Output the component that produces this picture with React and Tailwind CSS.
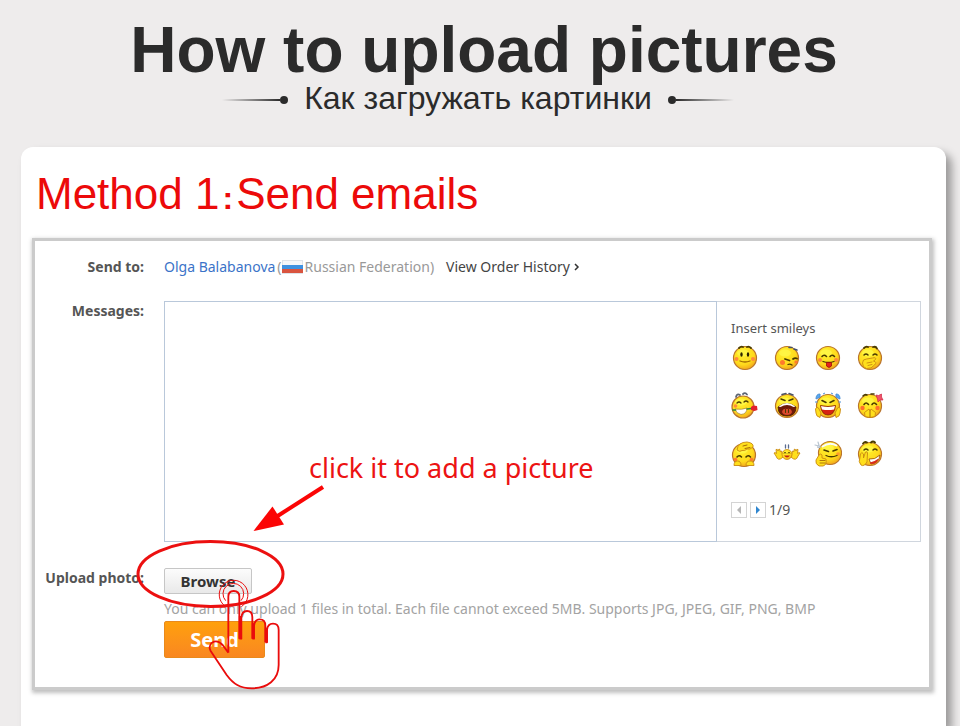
import React from "react";

function Head({ cx = 14, cy = 14, r = 11.5 }) {
  return (
    <>
      <circle cx={cx} cy={cy} r={r} fill="url(#skin)" stroke="#b9742c" strokeWidth="1.2" />
      <ellipse cx={cx - 2} cy={cy - 5} rx="6" ry="3.5" fill="#fff94d" opacity="0.7" />
    </>
  );
}

const ink = { fill: "none", stroke: "#4a3b00", strokeWidth: 1.3, strokeLinecap: "round" };
const hand = { fill: "#ffdf1c", stroke: "#c98a12", strokeWidth: 0.9 };

const smileys = [
  ["Smile", (
    <>
      <Head />
      <path d="M8 4q2-2 4-1M16 3q2-1 4 1" {...ink} strokeWidth="1.800" />
      <ellipse cx="10.500" cy="10.500" rx="1.200" ry="2.200" fill="#2d2500" />
      <ellipse cx="17" cy="10.500" rx="1.200" ry="2.200" fill="#2d2500" />
      <circle cx="5.500" cy="15" r="2" fill="#ff8a3c" />
      <circle cx="22" cy="15" r="2" fill="#ff8a3c" />
      <path d="M9 17q5 2 10 0" {...ink} stroke="#a06a00" />
    </>
  )],
  ["Shy", (
    <>
      <Head />
      <path d="M16 3.500l3 0M21 5l3 1" {...ink} stroke="#44506a" strokeWidth="1.600" />
      <path d="M12 15l4.500 1.500M20 15q2-1.500 4-.5" {...ink} strokeWidth="1.800" />
      <circle cx="9.500" cy="18.500" r="2.500" fill="#ff7a2c" />
      <circle cx="23" cy="18" r="1.600" fill="#ff7a2c" />
      <path d="M15 20.500q2-1 4 .5" {...ink} />
    </>
  )],
  ["Tongue out", (
    <>
      <Head />
      <path d="M8 12.500q2-2.500 4.500 0M16 12.500q2-2.500 4.500 0" {...ink} strokeWidth="1.600" />
      <circle cx="6" cy="16" r="2" fill="#ff8a3c" />
      <circle cx="22" cy="16" r="2" fill="#ff8a3c" />
      <path d="M9 17.500q5.500 2 11 0" {...ink} />
      <path d="M12.500 18.500h5v3.500q-2.500 3-5 0z" fill="#e5231b" stroke="#9c1109" strokeWidth="0.800" />
    </>
  )],
  ["Giggle", (
    <>
      <Head />
      <path d="M8 4q2-2 4-1M17 3q3-1 4 1.500" {...ink} strokeWidth="1.800" />
      <path d="M8 11q2-2 4 0M17 11q2-2 4 0" {...ink} strokeWidth="1.500" />
      <path d="M6.500 19q0-4 4-4l6-1q4-1 3 1.500l-2 1.500q4 1 1 4-3 4-8 3.500-4-1-4-5.500z" {...hand} />
      <path d="M11 19l5-1M12 21.500l4-1" {...ink} stroke="#c98a12" strokeWidth="0.900" />
    </>
  )],
  ["Rose", (
    <>
      <Head cx={12} cy={15} r={11} />
      <path d="M5 5q1-4 4-2M12 2q2-2 4 .5" {...ink} stroke="#5d6573" strokeWidth="1.800" />
      <path d="M6 11q2-2 4 0M13 10q2-2 4 0" {...ink} />
      <circle cx="4.500" cy="14" r="1.800" fill="#ff8a3c" />
      <path d="M4 17q7 1 12-1 0 6-6 6.500-5-1-6-5.500z" fill="#fff" stroke="#b08a30" strokeWidth="0.800" />
      <path d="M2 18l2.500 0M16 17l4-.5" {...ink} stroke="#27843b" strokeWidth="1.600" />
      <path d="M20 15l2-1.500 4 .5.500 4-3 1-3.500-1z" fill="#e21f2e" />
    </>
  )],
  ["Shout", (
    <>
      <Head />
      <path d="M9 2.500l4-1M16 1.500l4 1.500" {...ink} stroke="#4a5262" strokeWidth="1.500" />
      <path d="M8 7l4 1.500M20 7l-4 1.500" {...ink} strokeWidth="1.500" />
      <path d="M5 15q9-7 18 0 0 9-9 9t-9-9z" fill="#6e1a0a" stroke="#4a1c00" strokeWidth="0.800" />
      <path d="M5.500 14.500q8.500-7 17 0l-2 .5q-6.500-4-13 0z" fill="#fff" />
      <path d="M9 20q1-4 5-3 4-1 5 3-1 3-5 3t-5-3z" fill="#d9482b" />
      <path d="M12.500 17.500v3M15.500 17.500v3" {...ink} strokeWidth="1" />
    </>
  )],
  ["Laugh out loud", (
    <>
      <Head />
      <path d="M2 7q0-5 4-5v3zM26 7q0-5-4-5v3zM1 10h2.500M24.500 10h2.500M9 2l2-1M17 1l2 1" fill="#58a9ee" stroke="#4b8fd8" strokeWidth="1" />
      <path d="M8 8.500l4 2M20 8.500l-4 2" {...ink} strokeWidth="1.600" />
      <path d="M6.500 13.500q7.500 2 15 0-1 9.500-7.500 9.500t-7.500-9.500z" fill="#d62312" stroke="#7d2b00" strokeWidth="0.800" />
      <path d="M7 14q7 2 14 0l-1 3.500q-6 1-12 0z" fill="#fff" />
      <path d="M1.500 17q1-3 3-1l2.500 5-1 4.500q-4-1-4-4.500zM26.500 17q-1-3-3-1l-2.500 5 1 4.500q4-1 4-4.500z" {...hand} />
    </>
  )],
  ["In love", (
    <>
      <Head />
      <path d="M7 4q2-2 4-1M15 2l3 0" {...ink} strokeWidth="1.600" />
      <path d="M20 3l2.500.5 3-1.500v3l1.500 3-3 0-2 2-.5-3z" fill="#f05468" stroke="#cf2745" strokeWidth="0.700" />
      <path d="M8 12.500q2-3 4.500 0M16 12.500q2-3 4.500 0" {...ink} strokeWidth="1.600" />
      <circle cx="6.500" cy="16" r="2.200" fill="#ff6f2c" />
      <circle cx="21.500" cy="16" r="2.200" fill="#ff6f2c" />
      <path d="M8.500 20.500l4.500-3.500 1 2 1-2 4.500 3.500-.5 4-5 1-5-1z" {...hand} />
      <path d="M14 19v6" {...ink} stroke="#a76b09" strokeWidth="1" />
    </>
  )],
  ["Bow", (
    <>
      <Head cx={13} cy={15} r={11.5} />
      <path d="M6 10q1-8 10-8 7 1 6 5-3 3-6 2-2 2-5 1.500-2 2-5-.5z" {...hand} />
      <path d="M12 6l4-1M14 8.500l5-1" {...ink} stroke="#a76b09" strokeWidth="1" />
      <path d="M6 17q2-2.500 4.500 0M15 17q2-2.500 4.500 0" {...ink} strokeWidth="1.600" />
      <circle cx="4.500" cy="19.500" r="1.800" fill="#ff7a2c" />
      <circle cx="20.500" cy="19.500" r="1.800" fill="#ff7a2c" />
      <path d="M3 25.500q0-4.500 3.500-4.500t3.500 4.500zM15 25.500q0-4.500 4-4.500t4 4.500z" {...hand} />
    </>
  )],
  ["Hug", (
    <>
      <path d="M10 17q-5 5-7-1l-2-3q1-1 2.500.5L3 9.500q1.500-1 2 1.500l1-2q1.500 0 1 2.500l1.500-.5zM18 17q5 5 7-1l2-3q-1-1-2.500.5l.5-4q-1.500-1-2 1.500l-1-2q-1.500 0-1 2.500l-1.500-.5z" {...hand} />
      <circle cx="14" cy="14.500" r="5" fill="url(#skin)" stroke="#c98a12" strokeWidth="0.800" />
      <path d="M12.500 5v3M15.500 5v3" {...ink} stroke="#5a6c92" />
      <path d="M11 13q1-1.500 2 0M15 13q1-1.500 2 0" {...ink} strokeWidth="1" />
      <path d="M11 15.500h6q-3 4-6 0z" fill="#c3220f" />
    </>
  )],
  ["Thumbs up", (
    <>
      <Head cx={16} cy={13} r={11.5} />
      <path d="M1 5l4 1M4 2l1.500 5M6.500 7q-2 1-3 0" {...ink} stroke="#b9c5d1" strokeWidth="1.200" />
      <path d="M8.500 6.500q7-5 14-1" {...ink} stroke="#f8fbff" strokeWidth="1.800" />
      <path d="M10 10l4.500 1.500M23 9.500l-4 1.500" {...ink} strokeWidth="1.600" />
      <circle cx="24" cy="14" r="1.800" fill="#ff9a2c" />
      <path d="M12 15.500q5 2.500 11 0" {...ink} />
      <path d="M5 15q2-2 3 0v3l4 1q1 6-3 7H5q-4-2-3-6z" {...hand} />
      <path d="M6 20.500h5M6 23h5" {...ink} stroke="#a76b09" strokeWidth="0.900" />
    </>
  )],
  ["Whisper", (
    <>
      <Head />
      <path d="M7 3.500q2-2.500 4-1M15 2.500q2-2 4 0" {...ink} strokeWidth="1.800" />
      <path d="M8 10q2-2 4 0M17 10q2-2 4 0" {...ink} strokeWidth="1.500" />
      <path d="M13 19q6 1 11-4-1 8-9 9z" fill="#fff" stroke="#8a3a00" strokeWidth="0.700" />
      <path d="M14 22.500q4-.5 8.500-4-1 5.500-8 5.500z" fill="#d92b18" />
      <path d="M4.500 14q1-3 3 0v4l2-6q2-1 2 1l-.5 9q-3 5-6 3-3-3-1-8z" {...hand} />
    </>
  )],
];

function Flourish({ flip }) {
  return (
    <span aria-hidden="true" className={`flex items-center pt-1 ${flip ? "flex-row-reverse" : ""}`}>
      <span className={`h-0.5 w-[58px] from-transparent to-[#2b2b2b] ${flip ? "bg-linear-to-l" : "bg-linear-to-r"}`} />
      <span className="size-2 rounded-full bg-[#2b2b2b]" />
    </span>
  );
}

function PageButton({ label, disabled, d }) {
  return (
    <button type="button" aria-label={label} disabled={disabled} className="flex size-4 items-center justify-center border border-[#d4d4d4] bg-white">
      <svg viewBox="0 0 8 8" className="size-2" fill={disabled ? "#b5b5b5" : "#2f86cf"} aria-hidden="true"><path d={d} /></svg>
    </button>
  );
}

function SmileyPicker() {
  return (
    <section aria-label="Smileys" className="w-[204px] shrink-0 border border-l-0 border-[#d0d6de] pt-4 pl-[14px]">
      <h3 className="text-[13px] leading-5 text-[#555]">Insert smileys</h3>
      <div className="mt-1.5 grid w-[153px] grid-cols-[repeat(4,28px)] justify-between gap-y-5">
        {smileys.map(([name, art]) => (
          <button key={name} type="button" aria-label={name} className="size-7">
            <svg viewBox="0 0 28 28" className="size-7" aria-hidden="true">{art}</svg>
          </button>
        ))}
      </div>
      <div className="mt-8 flex items-center gap-[3px] text-sm leading-5 text-[#555]">
        <PageButton label="Previous page" disabled d="M6 0L2 4l4 4z" />
        <PageButton label="Next page" d="M2 0l4 4-4 4z" />
        <span>1/9</span>
      </div>
    </section>
  );
}

function Annotations() {
  return (
    <div className="pointer-events-none absolute top-0 left-0">
      <p className="absolute top-[211px] left-[274px] text-[27px] leading-8 whitespace-nowrap text-[#ec1313]">click it to add a picture</p>
      <svg viewBox="130 480 210 140" className="absolute top-[239px] left-[95px] h-[140px] w-[210px]" aria-hidden="true">
        <ellipse cx="210.500" cy="574" rx="72.500" ry="32.500" fill="none" stroke="#ec1010" strokeWidth="3" />
        <path d="M323 487L276 517" stroke="#fb0505" strokeWidth="4" />
        <path d="M253.500 531L272.500 506.500 284 524.500z" fill="#fb0505" />
      </svg>
      <svg viewBox="561 144 231 342" className="absolute top-[337px] left-[172px] h-[114px] w-[77px]" fill="none" stroke="#ea0c0c" strokeWidth="5.500" aria-hidden="true">
        <path d="M616 229A43 43 0 1 1 664 230" strokeWidth="3" />
        <path d="M617 212A31 31 0 1 1 663 212" strokeWidth="3" />
        <path d="M625 368V200Q625 183 641 183Q658 183 658 200V326M658 326h6V264Q665 243 681 243Q697 243 697 262V326M697 326h5V288Q704 268 719 268Q736 268 736 287V337M736 337h5V300Q743 281 759 281Q776 281 776 300V405C776 450 742 475 695 475C660 475 640 462 620 435L572 363Q564 348 576 338Q592 328 608 345L625 368" strokeLinejoin="round" />
        <path d="M661 258V326M700 280V326M739 295V337" strokeWidth="9" />
      </svg>
    </div>
  );
}

const label = "text-right text-sm leading-5 font-bold text-[#555]";

function EmailForm() {
  return (
    <form
      onSubmit={(e) => e.preventDefault()}
      className="relative border-[3px] border-[#cbcbcb] bg-white pt-4 pr-2 pb-[29px] font-['Noto_Sans',sans-serif] shadow-[1px_2px_4px_1px_rgba(0,0,0,0.25)]"
    >
      <div className="grid grid-cols-[109px_minmax(0,1fr)] gap-x-5">
        <span className={label}>Send to:</span>
        <div className="flex items-center text-sm leading-5 whitespace-nowrap text-[#999]">
          <a href="#recipient" className="mr-0.5 text-[#3b73c8]">Olga Balabanova</a>
          <span>(</span>
          <svg viewBox="0 0 21 14" className="mr-0.5 h-[14px] w-[21px]" aria-hidden="true">
            <path d="M0 0h21v14H0z" fill="#dfe3e8" />
            <path d="M1 1h19v4H1z" fill="#f5f7fa" />
            <path d="M0 5h21v4H0z" fill="#3e91e0" />
            <path d="M0 9h21v4H0z" fill="#d9543f" />
          </svg>
          <span>Russian Federation)</span>
          <a href="#orders" className="ml-3 flex items-center gap-1 text-[#444]">
            View Order History
            <svg viewBox="0 0 6 8" className="h-2 w-1.5" fill="none" stroke="#333" strokeWidth="1.500" aria-hidden="true"><path d="M1 1l3 3-3 3" /></svg>
          </a>
        </div>

        <label htmlFor="message" className={`mt-6 ${label}`}>Messages:</label>
        <div className="mt-6 flex">
          <textarea id="message" className="h-[241px] min-w-0 flex-1 resize-none border border-[#b9c8da] bg-white p-2 text-sm outline-none" />
          <SmileyPicker />
        </div>

        <span id="upload-label" className={`mt-[26px] ${label}`}>Upload photo:</span>
        <div className="mt-[26px]">
          <button type="button" aria-describedby="upload-label" className="block h-[26px] w-[88px] rounded-xs border border-[#c6c6c6] bg-linear-to-b from-[#fcfcfc] to-[#e9e9e9] text-[15px] leading-5 font-bold text-[#333]">Browse</button>
          <p className="mt-[5px] text-sm leading-5 text-[#a3a3a3]">You can only upload 1 files in total. Each file cannot exceed 5MB. Supports JPG, JPEG, GIF, PNG, BMP</p>
          <button type="submit" className="mt-0.5 block h-[37px] w-[101px] rounded-xs border border-[#e98a1c] bg-linear-to-b from-[#ffa00a] to-[#f98720] text-xl leading-7 font-bold text-white">Send</button>
        </div>
      </div>
      <Annotations />
    </form>
  );
}

export default function App() {
  return (
    <div className="flex min-h-screen flex-col overflow-x-hidden bg-[#eeecec] pt-5 font-['Liberation_Sans',Arial,sans-serif] text-[#2b2b2b]">
      <svg className="absolute size-0" aria-hidden="true">
        <radialGradient id="skin" cx="0.400" cy="0.300" r="0.750">
          <stop offset="0" stopColor="#fff22e" />
          <stop offset="0.650" stopColor="#ffd91c" />
          <stop offset="1" stopColor="#f0a01c" />
        </radialGradient>
      </svg>
      <header className="pl-2 text-center">
        <h1 className="text-[64px] leading-[60px] font-bold whitespace-nowrap">How to upload pictures</h1>
        <div className="flex items-center justify-center gap-4 pr-3">
          <Flourish />
          <p className="text-[32px] leading-9 whitespace-nowrap">Как загружать картинки</p>
          <Flourish flip />
        </div>
      </header>
      <main className="mt-[31px] mr-[14px] ml-[21px] flex-1 rounded-t-xl bg-white pt-[22px] pr-[14px] pb-8 pl-[11px] shadow-[6px_6px_8px_rgba(0,0,0,0.35)]">
        <h2 className="pl-1 text-[44px] leading-[50px] whitespace-nowrap text-[#ec0a0a]">
          Method 1<span className="px-[3px] text-[32px] font-bold">:</span>Send emails
        </h2>
        <div className="mt-[15px]">
          <EmailForm />
        </div>
      </main>
    </div>
  );
}
